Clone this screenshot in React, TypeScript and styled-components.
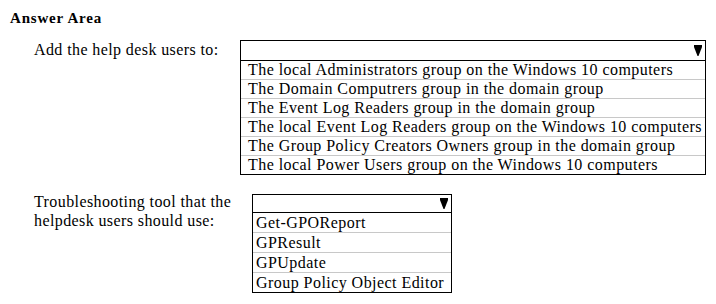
import React from "react";
import styled, { createGlobalStyle } from "styled-components";

const GlobalStyle = createGlobalStyle`
  html, body { margin: 0; padding: 0; background: #ffffff; }
  body { font-family: "Liberation Serif", "Times New Roman", serif; color: #000; }
`;

const Page = styled.div`
  width: 716px;
  height: 304px;
  box-sizing: border-box;
  padding: 9px 0 0 10px;
  background: #fff;
`;

const Title = styled.div`
  font-weight: bold;
  font-size: 15px;
  letter-spacing: 0.8px;
  line-height: 18px;
  height: 18px;
`;

const Question = styled.div<{ $top: number }>`
  display: flex;
  align-items: flex-start;
  margin-left: 24px;
  margin-top: ${(p) => p.$top}px;
`;

const Label = styled.div<{ $width: number; $shift: number }>`
  width: ${(p) => p.$width}px;
  flex: none;
  font-size: 16px;
  letter-spacing: 0.4px;
  line-height: 19px;
  margin-top: ${(p) => p.$shift}px;
`;

const Dropdown = styled.div<{ $width: number }>`
  width: ${(p) => p.$width}px;
  box-sizing: border-box;
  border: 1px solid #000;
  display: flex;
  flex-direction: column;
`;

const Header = styled.div<{ $height: number }>`
  height: ${(p) => p.$height}px;
  border-bottom: 1px solid #000;
  display: flex;
  justify-content: flex-end;
  align-items: center;
  padding-right: 3px;
`;

const Option = styled.div<{ $height: number; $pad: number }>`
  height: ${(p) => p.$height}px;
  line-height: ${(p) => p.$height}px;
  font-size: 16px;
  letter-spacing: 0.45px;
  padding-left: ${(p) => p.$pad}px;
  white-space: nowrap;
  border-bottom: 1px solid #c8c8c8;
  &:last-child { border-bottom: none; }
`;

const Arrow = () => (
  <svg width="8" height="11" viewBox="0 0 8 11">
    <polygon points="0,0 8,0 8,2 4.5,11 3.5,11 0,2" fill="#000" />
  </svg>
);

const q1 = [
  "The local Administrators group on the Windows 10 computers",
  "The Domain Computrers group in the domain group",
  "The Event Log Readers group in the domain group",
  "The local Event Log Readers group on the Windows 10 computers",
  "The Group Policy Creators Owners group in the domain group",
  "The local Power Users group on the Windows 10 computers",
];

const q2 = ["Get-GPOReport", "GPResult", "GPUpdate", "Group Policy Object Editor"];

export default function App() {
  return (
    <>
      <GlobalStyle />
      <Page>
        <Title>Answer Area</Title>
        <Question $top={13}>
          <Label $width={206} $shift={0}>Add the help desk users to:</Label>
          <Dropdown $width={466}>
            <Header $height={19}>
              <Arrow />
            </Header>
            {q1.map((t) => (
              <Option key={t} $height={18} $pad={7}>
                {t}
              </Option>
            ))}
          </Dropdown>
        </Question>
        <Question $top={19}>
          <Label $width={218} $shift={-2}>
            Troubleshooting tool that the
            <br />
            helpdesk users should use:
          </Label>
          <Dropdown $width={200}>
            <Header $height={17}>
              <Arrow />
            </Header>
            {q2.map((t) => (
              <Option key={t} $height={19} $pad={3}>
                {t}
              </Option>
            ))}
          </Dropdown>
        </Question>
      </Page>
    </>
  );
}
